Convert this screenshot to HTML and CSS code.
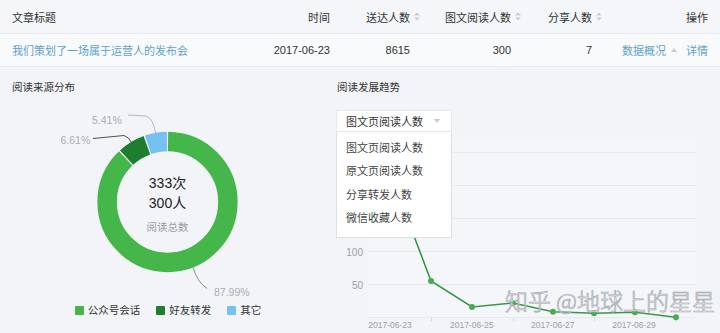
FILE: index.html
```html
<!DOCTYPE html>
<html>

<head>
    <meta charset="utf-8">
    <link rel="stylesheet" href="styles.css">
</head>

<body>
    <div class="table">
        <div class="row head">
            <div class="cell">文章标题</div>
            <div class="cell right">时间</div>
            <div class="cell right">送达人数<svg class="sort" width="6" height="9" viewBox="0 0 6 9"><polygon points="0,3.5 3,0.5 6,3.5"/><polygon points="0,5.5 3,8.5 6,5.5"/></svg></div>
            <div class="cell right">图文阅读人数<svg class="sort" width="6" height="9" viewBox="0 0 6 9"><polygon points="0,3.5 3,0.5 6,3.5"/><polygon points="0,5.5 3,8.5 6,5.5"/></svg></div>
            <div class="cell right">分享人数<svg class="sort" width="6" height="9" viewBox="0 0 6 9"><polygon points="0,3.5 3,0.5 6,3.5"/><polygon points="0,5.5 3,8.5 6,5.5"/></svg></div>
            <div class="cell right">操作</div>
        </div>
        <div class="row data">
            <div class="cell"><a class="link">我们策划了一场属于运营人的发布会</a></div>
            <div class="cell right">2017-06-23</div>
            <div class="cell right padded">8615</div>
            <div class="cell right padded">300</div>
            <div class="cell right padded">7</div>
            <div class="cell right ops">
                <a class="link">数据概况</a>
                <span class="caret-up"></span>
                <a class="link">详情</a>
            </div>
        </div>
    </div>

    <div class="panels">
        <div class="panel source">
            <h2>阅读来源分布</h2>
            <svg class="donut" width="306" height="200" viewBox="0 0 306 200">
                <g transform="rotate(-90 155.5 102)">
                    <circle cx="155.5" cy="102" r="60.4" fill="none" stroke="#ffffff" stroke-width="19.5"/>
                    <circle cx="155.5" cy="102" r="60.4" fill="none" stroke="#45b649" stroke-width="19.5" pathLength="100" stroke-dasharray="87.69 12.31" stroke-dashoffset="-0.15"/>
                    <circle cx="155.5" cy="102" r="60.4" fill="none" stroke="#1f7d30" stroke-width="19.5" pathLength="100" stroke-dasharray="6.31 93.69" stroke-dashoffset="-88.14"/>
                    <circle cx="155.5" cy="102" r="60.4" fill="none" stroke="#74c1f2" stroke-width="19.5" pathLength="100" stroke-dasharray="5.11 94.89" stroke-dashoffset="-94.75"/>
                </g>
                <path d="M116 15 L134 16 Q141 18 143.7 33" fill="none" stroke="#b4b9c0" stroke-width="1"/>
                <path d="M81 38.5 L112 35.5 Q117 37 119.5 42.5" fill="none" stroke="#4d554f" stroke-width="1"/>
                <path d="M181 167 Q185 182 195 188.5" fill="none" stroke="#8c968c" stroke-width="1"/>
                <text class="pct" x="80" y="24">5.41%</text>
                <text class="pct" x="48.5" y="44">6.61%</text>
                <text class="pct" x="202" y="196">87.99%</text>
                <text class="total" x="155.5" y="88">333次</text>
                <text class="total" x="155.5" y="108">300人</text>
                <text class="total-label" x="155.5" y="131">阅读总数</text>
            </svg>
            <div class="legend">
                <span class="legend-item"><i class="swatch green"></i>公众号会话</span>
                <span class="legend-item"><i class="swatch dark"></i>好友转发</span>
                <span class="legend-item"><i class="swatch blue"></i>其它</span>
            </div>
        </div>

        <div class="panel trend">
            <h2>阅读发展趋势</h2>
            <div class="chart-wrap">
                <svg class="chart" width="383" height="233" viewBox="0 0 383 233">
                    <rect x="31" y="40" width="329" height="177" fill="#f4f6f9"/>
                    <g stroke="#e6e9ee" stroke-width="1">
                        <line x1="31" y1="52.5" x2="360" y2="52.5"/>
                        <line x1="31" y1="85.5" x2="360" y2="85.5"/>
                        <line x1="31" y1="118.5" x2="360" y2="118.5"/>
                        <line x1="31" y1="151.5" x2="360" y2="151.5"/>
                        <line x1="31" y1="184.5" x2="360" y2="184.5"/>
                        <line x1="31" y1="217.5" x2="360" y2="217.5"/>
                    </g>
                    <g stroke="#d5d9df" stroke-width="1">
                        <line x1="94.5" y1="218" x2="94.5" y2="221"/>
                        <line x1="176.5" y1="218" x2="176.5" y2="221"/>
                        <line x1="257.5" y1="218" x2="257.5" y2="221"/>
                        <line x1="339.5" y1="218" x2="339.5" y2="221"/>
                    </g>
                    <text class="axis y" x="26" y="155.5">100</text>
                    <text class="axis y" x="26" y="188.5">50</text>
                    <text class="axis x" x="53" y="228">2017-06-23</text>
                    <text class="axis x" x="134.7" y="228">2017-06-25</text>
                    <text class="axis x" x="215.7" y="228">2017-06-27</text>
                    <text class="axis x" x="297" y="228">2017-06-29</text>
                    <polyline points="53,72.5 94,181 135,207 176,203 216,211.7 257,213.3 298,212.3 339,217.3" fill="none" stroke="#3d9549" stroke-width="1.6"/>
                    <g fill="#47ad51">
                        <circle cx="94" cy="181" r="3"/>
                        <circle cx="135" cy="207" r="3"/>
                        <circle cx="176" cy="203" r="3"/>
                        <circle cx="216" cy="211.7" r="3"/>
                        <circle cx="257" cy="213.3" r="3"/>
                        <circle cx="298" cy="212.3" r="3"/>
                        <circle cx="339" cy="217.3" r="3"/>
                    </g>
                </svg>

                <div class="dropdown">
                    <div class="select">
                        <span>图文页阅读人数</span>
                        <span class="caret-down"></span>
                    </div>
                    <ul class="menu">
                        <li>图文页阅读人数</li>
                        <li>原文页阅读人数</li>
                        <li>分享转发人数</li>
                        <li>微信收藏人数</li>
                    </ul>
                </div>
            </div>
        </div>
    </div>

    <div class="watermark">知乎 @地球上的星星</div>
</body>

</html>
```

FILE: styles.css
```css
body {
    margin: 0;
    width: 720px;
    height: 333px;
    overflow: hidden;
    position: relative;
    background-color: #f2f4f8;
    font-family: "Liberation Sans", "Noto Sans CJK SC", sans-serif;
    color: #333;
}

.row {
    display: grid;
    grid-template-columns: 248px 70px 90px 101px 81px 106px;
    padding: 0 12px;
    align-items: center;
    font-size: 11px;
}

.head {
    height: 33px;
    background-color: #f5f6f9;
    border-bottom: 1px solid #e7eaee;
}

.data {
    height: 32px;
    background-color: #f9fafb;
    border-bottom: 1px solid #e7eaee;
}

.cell {
    white-space: nowrap;
}

.right {
    display: flex;
    justify-content: flex-end;
    align-items: center;
}

.padded {
    padding-right: 10px;
}

.sort {
    margin-left: 4px;
    fill: #c9cdd3;
}

.link {
    color: #5ea2cc;
    text-decoration: none;
}

.ops .link + .caret-up {
    margin-left: 5px;
}

.caret-up {
    width: 0;
    height: 0;
    border-left: 3px solid transparent;
    border-right: 3px solid transparent;
    border-bottom: 4px solid #c9cdd3;
    margin-right: 9px;
}

.panels {
    display: flex;
}

.panel {
    box-sizing: border-box;
    padding-top: 10px;
}

.source {
    width: 330px;
    padding-left: 12px;
    padding-right: 12px;
}

.trend {
    flex: 1;
    padding-left: 7px;
}

h2 {
    margin: 0;
    font-size: 10.5px;
    font-weight: normal;
    line-height: 20px;
    color: #333;
}

.donut {
    display: block;
    margin-top: 3px;
    font-family: "Liberation Sans", "Noto Sans CJK SC", sans-serif;
}

.pct {
    font-size: 10.5px;
    fill: #a9aeb6;
}

.total {
    font-size: 14px;
    fill: #222;
    text-anchor: middle;
}

.total-label {
    font-size: 10.5px;
    fill: #9a9ea5;
    text-anchor: middle;
}

.legend {
    display: flex;
    justify-content: center;
    gap: 16px;
    margin-top: 3px;
    padding-left: 6px;
    font-size: 10.5px;
    line-height: 14px;
}

.legend-item {
    display: flex;
    align-items: center;
}

.swatch {
    width: 9px;
    height: 9px;
    margin-right: 4px;
    border-radius: 1px;
}

.swatch.green {
    background-color: #45b649;
}

.swatch.dark {
    background-color: #1f7d30;
}

.swatch.blue {
    background-color: #74c1f2;
}

.chart-wrap {
    position: relative;
    margin-top: 3px;
}

.chart {
    display: block;
    font-family: "Liberation Sans", "Noto Sans CJK SC", sans-serif;
}

.axis {
    fill: #9ba0a7;
}

.axis.y {
    font-size: 10px;
    text-anchor: end;
}

.axis.x {
    font-size: 8.5px;
    text-anchor: middle;
}

.dropdown {
    position: absolute;
    left: -1px;
    top: 10px;
    width: 116px;
    font-size: 11px;
}

.select {
    height: 22px;
    display: flex;
    align-items: center;
    justify-content: space-between;
    padding: 0 9px;
    background-color: #fff;
    border: 1px solid #e6e9ed;
    box-sizing: border-box;
}

.caret-down {
    width: 0;
    height: 0;
    border-left: 3.5px solid transparent;
    border-right: 3.5px solid transparent;
    border-top: 4px solid #c5c9cf;
    margin-right: 2px;
}

.menu {
    list-style: none;
    margin: 0;
    padding: 5px 0 6px;
    background-color: #fff;
    border: 1px solid #dcdfe4;
    border-top: none;
    color: #444;
}

.menu li {
    line-height: 23.4px;
    padding-left: 9px;
}

.watermark {
    position: absolute;
    left: 505px;
    top: 286px;
    font-size: 23px;
    line-height: 28px;
    white-space: nowrap;
    color: rgba(255, 255, 255, 0.92);
    -webkit-text-stroke: 0.7px #a3a8ae;
    font-family: "Noto Sans CJK SC", sans-serif;
    font-weight: 300;
}
```
